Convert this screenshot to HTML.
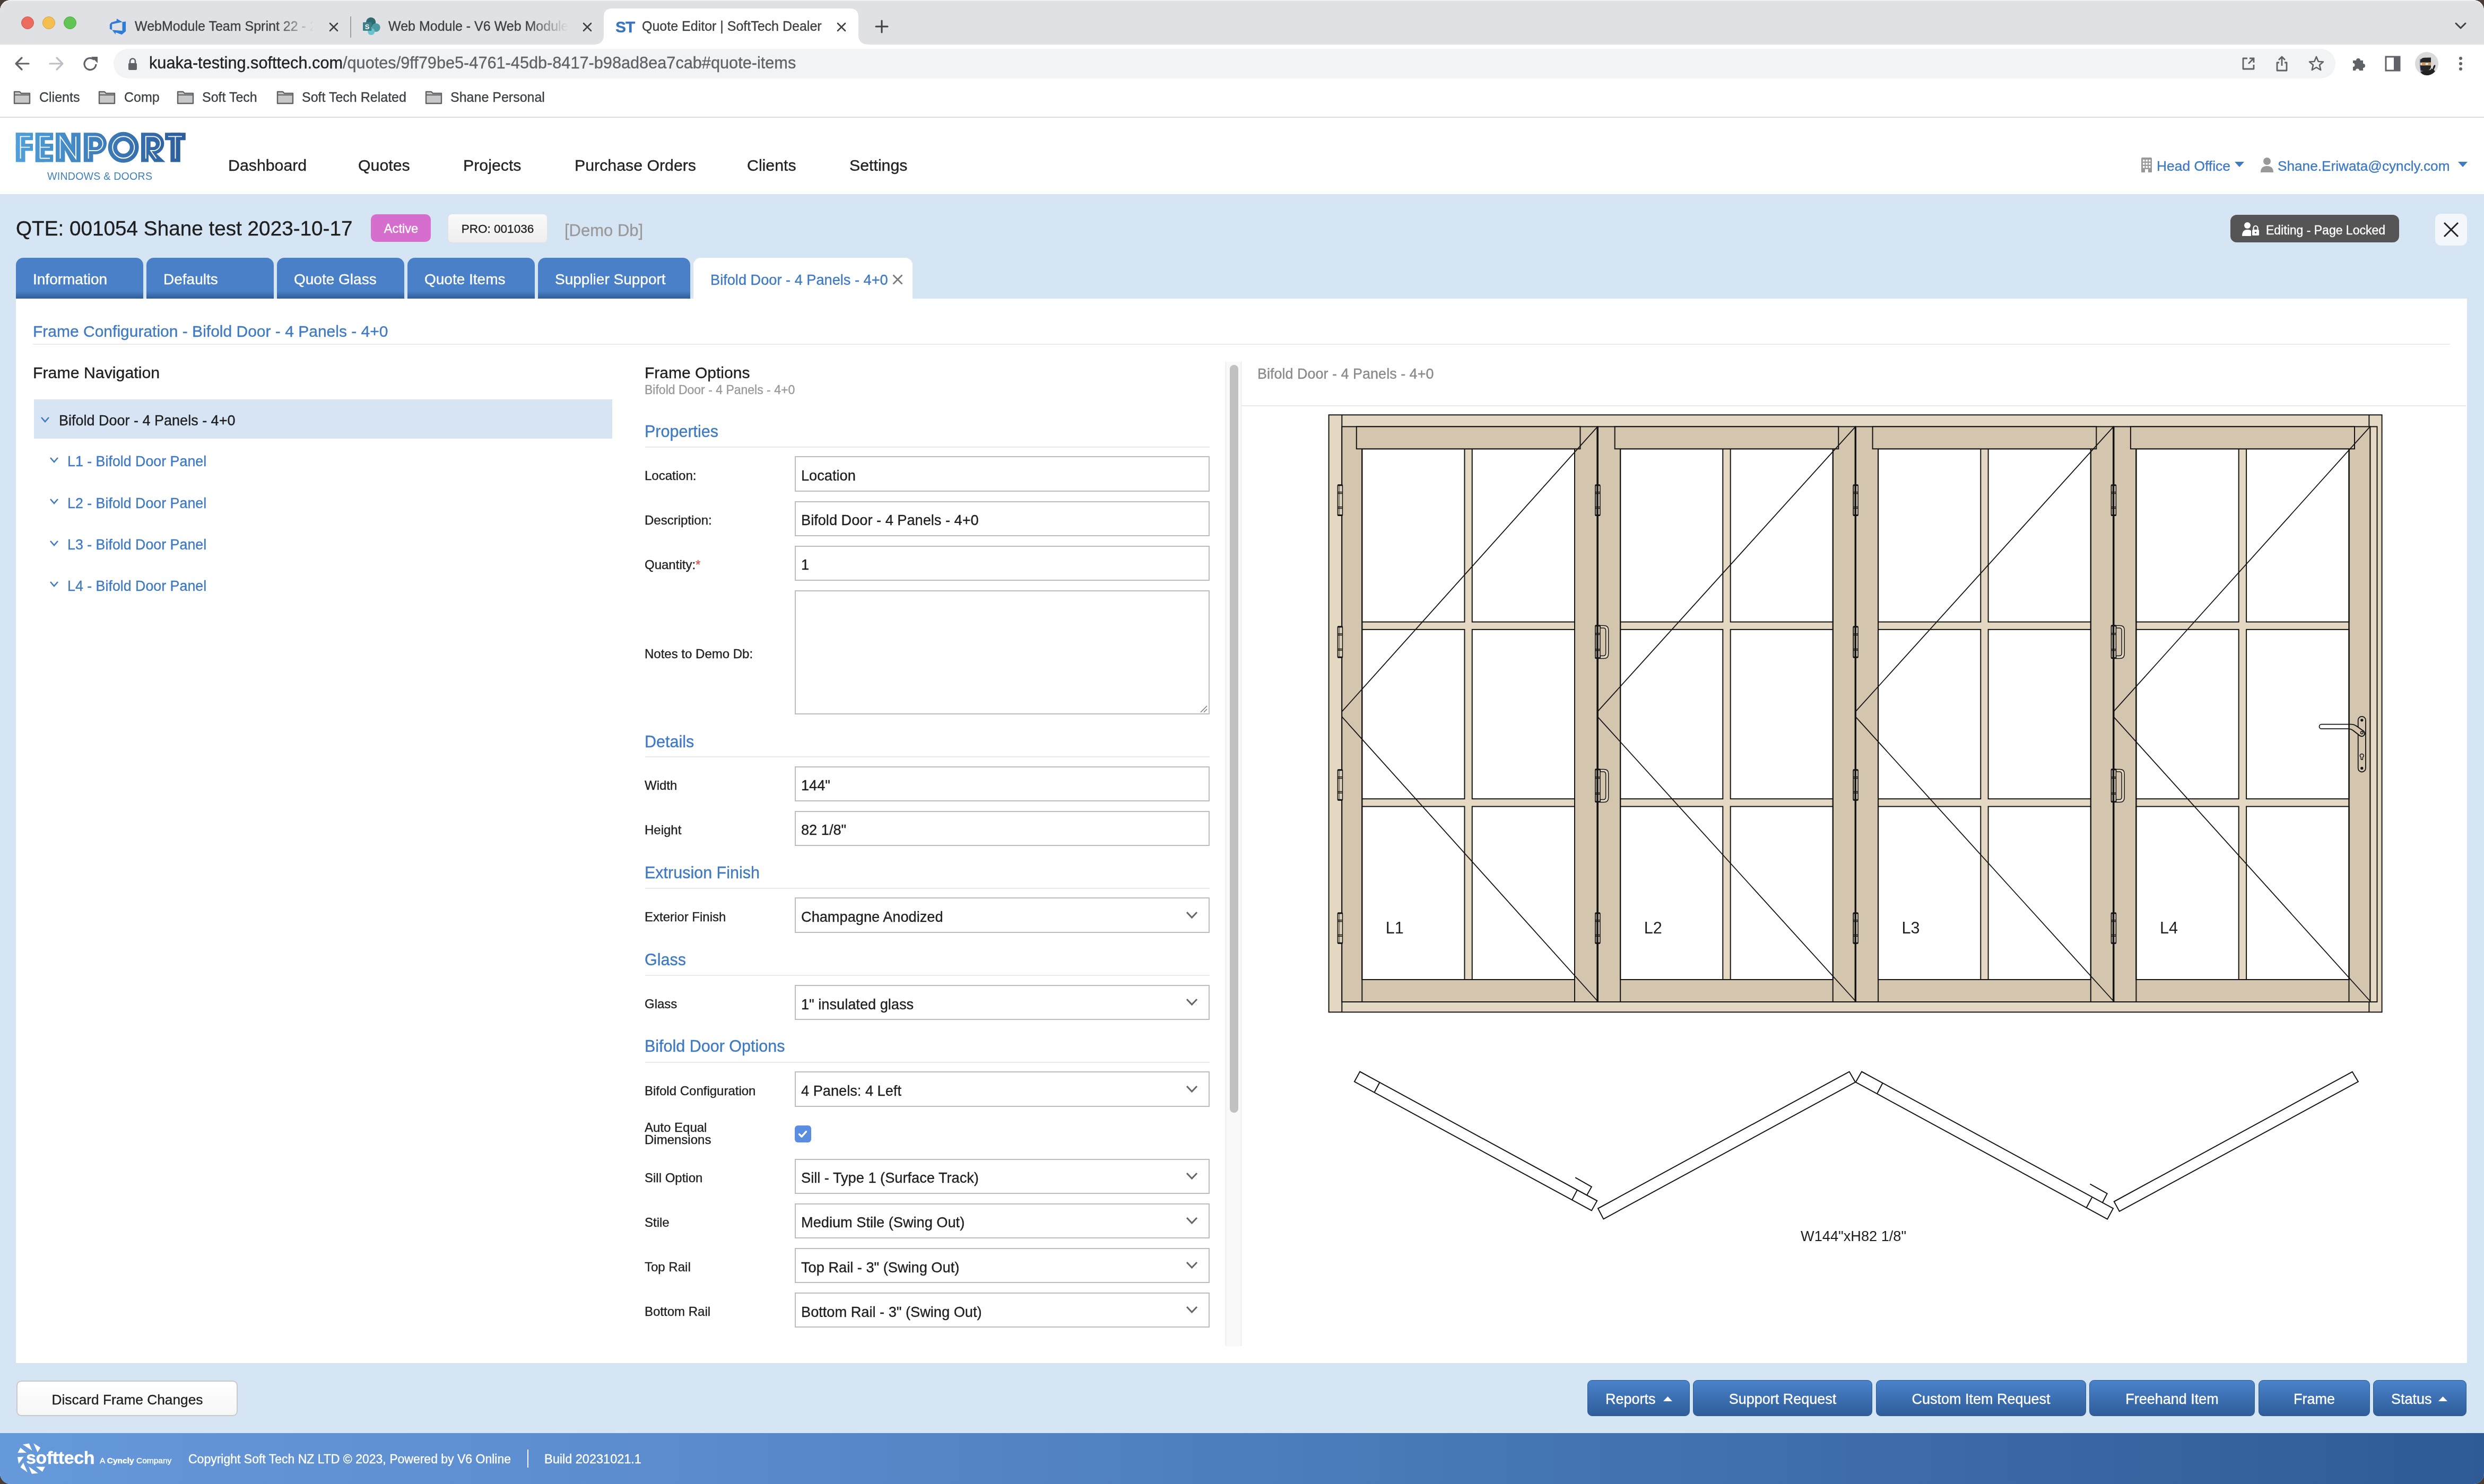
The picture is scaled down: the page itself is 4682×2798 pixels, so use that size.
<!DOCTYPE html><html><head><meta charset="utf-8"><title>Quote Editor | SoftTech Dealer</title><style>
html,body{margin:0;padding:0;width:4682px;height:2798px;overflow:hidden;background:#4A3D36;}
#win{position:absolute;left:0;top:0;width:4682px;height:2798px;overflow:hidden;border-radius:20px;background:#fff;}
#hl{position:absolute;left:0;top:0;width:4682px;height:60px;border-radius:20px 20px 0 0;box-shadow:inset 0 1.5px 0 #F4F4F4;pointer-events:none;}
.t{position:absolute;line-height:1;white-space:pre;font-family:"Liberation Sans",sans-serif;-webkit-font-smoothing:antialiased;will-change:transform;-webkit-text-stroke:0.35px currentColor;}
.r{position:absolute;box-sizing:border-box;}
svg.r{overflow:visible;}
</style></head><body><div id="win">
<div class="r" style="left:0.0px;top:0.0px;width:4682.0px;height:84.0px;background:#DFE1E5;"></div>
<div id="hl"></div>
<div class="r" style="left:40.0px;top:31.0px;width:24.0px;height:24.0px;background:#EC6A5E;border-radius:50%;border:1px solid #D1584C;"></div>
<div class="r" style="left:80.0px;top:31.0px;width:24.0px;height:24.0px;background:#F4BF4F;border-radius:50%;border:1px solid #D6A13A;"></div>
<div class="r" style="left:120.0px;top:31.0px;width:24.0px;height:24.0px;background:#61C554;border-radius:50%;border:1px solid #4FA843;"></div>
<svg class="r" style="left:205px;top:33px;" width="34" height="34" viewBox="0 0 18 18"><path d="M17 4v9.74l-4 3.28-6.2-2.26V17l-3.51-4.59 10.23.8V4.44zm-3.41.49L7.85 1v2.29L2.58 4.84 1 6.87v4.61l2.26 1V6.57z" fill="#2F7BD8"/></svg>
<div class="t" style="left:253.5px;top:36.8px;font-size:25px;color:#3C4043;font-weight:400;">WebModule Team Sprint 22 - 2</div>
<div class="r" style="left:520.0px;top:30.0px;width:85.0px;height:42.0px;background:linear-gradient(90deg,rgba(223,225,229,0),#DFE1E5 85%);"></div>
<svg class="r" style="left:620px;top:42px;" width="18" height="18" viewBox="0 0 18 18"><path d="M2 2 L16 16 M16 2 L2 16" stroke="#3C4043" stroke-width="2.6" stroke-linecap="round"/></svg>
<div class="r" style="left:660.0px;top:31.0px;width:2.0px;height:40.0px;background:#9AA0A6;"></div>
<svg class="r" style="left:682px;top:32px;" width="36" height="36" viewBox="0 0 36 36"><circle cx="17.1" cy="9.9" r="9.2" fill="#2E6B70"/><circle cx="26.7" cy="20" r="8" fill="#4C9AA2"/><circle cx="17.8" cy="27.5" r="6.6" fill="#68C3CF"/><rect x="2" y="10" width="16.4" height="16" rx="1" fill="#3C8087"/><text x="10.2" y="22.6" font-family="Liberation Sans" font-weight="700" font-size="13" fill="#fff" text-anchor="middle">S</text></svg>
<div class="t" style="left:731.5px;top:36.8px;font-size:25px;color:#3C4043;font-weight:400;">Web Module - V6 Web Module</div>
<div class="r" style="left:995.0px;top:30.0px;width:85.0px;height:42.0px;background:linear-gradient(90deg,rgba(223,225,229,0),#DFE1E5 90%);"></div>
<svg class="r" style="left:1098px;top:42px;" width="18" height="18" viewBox="0 0 18 18"><path d="M2 2 L16 16 M16 2 L2 16" stroke="#3C4043" stroke-width="2.6" stroke-linecap="round"/></svg>
<svg class="r" style="left:1118px;top:14px;" width="520" height="72" viewBox="0 0 520 72"><path d="M0 70 Q20 70 20 52 L20 18 Q20 2 36 2 L484 2 Q500 2 500 18 L500 52 Q500 70 520 70 Z" fill="#fff"/></svg>
<div class="r" style="left:1110.0px;top:84.0px;width:3572.0px;height:2.0px;background:#fff;"></div>
<div class="t" style="left:1159.5px;top:35.6px;font-size:30px;color:#3B75C0;font-weight:700;letter-spacing:-1px;">ST</div>
<div class="t" style="left:1209.5px;top:36.8px;font-size:25px;color:#3C4043;font-weight:400;">Quote Editor | SoftTech Dealer</div>
<svg class="r" style="left:1577px;top:42px;" width="18" height="18" viewBox="0 0 18 18"><path d="M2 2 L16 16 M16 2 L2 16" stroke="#3C4043" stroke-width="2.6" stroke-linecap="round"/></svg>
<svg class="r" style="left:1649px;top:37px;" width="26" height="26" viewBox="0 0 26 26"><path d="M13 2 V24 M2 13 H24" stroke="#3C4043" stroke-width="3" stroke-linecap="round"/></svg>
<svg class="r" style="left:4626px;top:40px;" width="24" height="18" viewBox="0 0 24 18"><path d="M3 4 L12 13 L21 4" stroke="#3C4043" stroke-width="3" fill="none" stroke-linecap="round" stroke-linejoin="round"/></svg>
<svg class="r" style="left:26px;top:104px;" width="32" height="32" viewBox="0 0 32 32"><path d="M28 16 H6 M15 5 L4 16 L15 27" stroke="#5F6368" stroke-width="3.2" fill="none" stroke-linecap="round" stroke-linejoin="round"/></svg>
<svg class="r" style="left:90px;top:104px;" width="32" height="32" viewBox="0 0 32 32"><path d="M4 16 H26 M17 5 L28 16 L17 27" stroke="#BDC1C6" stroke-width="3.2" fill="none" stroke-linecap="round" stroke-linejoin="round"/></svg>
<svg class="r" style="left:155px;top:104px;" width="32" height="32" viewBox="0 0 32 32"><path d="M26 17 A11 11 0 1 1 22.5 8.5" stroke="#5F6368" stroke-width="3.2" fill="none"/><path d="M17 3 L29 3 L29 15 Z" fill="#5F6368"/></svg>
<div class="r" style="left:214.0px;top:92.0px;width:4188.0px;height:56.0px;background:#F1F3F4;border-radius:28px;"></div>
<svg class="r" style="left:240px;top:108px;" width="20" height="26" viewBox="0 0 20 26"><path d="M5 11 V7.5 A5 5 0 0 1 15 7.5 V11" stroke="#5F6368" stroke-width="2.6" fill="none"/><rect x="2" y="11" width="16" height="13" rx="2" fill="#5F6368"/></svg>
<div class="t" style="left:280.5px;top:104.0px;font-size:30.7px;color:#202124;font-weight:400;">kuaka-testing.softtech.com<span style="color:#5F6368">/quotes/9ff79be5-4761-45db-8417-b98ad8ea7cab#quote-items</span></div>
<svg class="r" style="left:4224px;top:106px;" width="28" height="28" viewBox="0 0 28 28"><path d="M12 4 H4 V24 H24 V16" stroke="#5F6368" stroke-width="2.8" fill="none" stroke-linejoin="round"/><path d="M14 14 L24 4 M16 4 H24 V12" stroke="#5F6368" stroke-width="2.8" fill="none"/></svg>
<svg class="r" style="left:4287px;top:104px;" width="28" height="32" viewBox="0 0 28 32"><path d="M14 3 V20 M8 9 L14 3 L20 9" stroke="#5F6368" stroke-width="2.8" fill="none" stroke-linejoin="round"/><path d="M9 14 H5 V29 H23 V14 H19" stroke="#5F6368" stroke-width="2.8" fill="none" stroke-linejoin="round"/></svg>
<svg class="r" style="left:4350px;top:104px;" width="32" height="32" viewBox="0 0 32 32"><path d="M16 3 L19.8 12 L29 12.5 L22 18.6 L24.2 28 L16 23 L7.8 28 L10 18.6 L3 12.5 L12.2 12 Z" stroke="#5F6368" stroke-width="2.6" fill="none" stroke-linejoin="round"/></svg>
<svg class="r" style="left:4430px;top:104px;" width="32" height="32" viewBox="0 0 32 32"><path d="M5 10 H11 A4 4 0 0 1 19 10 H24 V16 A4 4 0 0 1 24 24 V29 H17 A3.5 3.5 0 0 0 10 29 H5 V22 A3.5 3.5 0 0 0 5 15 Z" fill="#5F6368"/></svg>
<svg class="r" style="left:4494px;top:104px;" width="32" height="32" viewBox="0 0 32 32"><rect x="3" y="3" width="26" height="26" fill="none" stroke="#5F6368" stroke-width="3"/><rect x="18" y="3" width="11" height="26" fill="#5F6368"/></svg>
<svg class="r" style="left:4550px;top:97px;" width="46" height="46" viewBox="0 0 46 46"><circle cx="24" cy="23" r="22" fill="#DADADA"/><path d="M12 38 Q16 46 27 45 Q36 43 40 37 L34 34 Z" fill="#222"/><path d="M11.5 20 Q12 12 20 11.8 L32 11.5 L32 30 Q30 36 22 37 Q14 37 12 36 Z" fill="#262626"/><path d="M12 14 Q11 26 13 36" stroke="#3B5A8A" stroke-width="1.2" fill="none"/><rect x="11.5" y="20.5" width="20.5" height="6" fill="#C59A6E"/><ellipse cx="13.5" cy="23.6" rx="1.4" ry="1.6" fill="#fff"/><ellipse cx="24.3" cy="23.6" rx="3" ry="1.4" fill="#fff"/><path d="M39.5 25 Q41 26 40 29 L36 37 L34 36 L37 27 Z" fill="#222"/><path d="M32 33 L38 36" stroke="#222" stroke-width="2"/></svg>
<div class="r" style="left:4635.0px;top:106.8px;width:6.4px;height:6.4px;background:#5F6368;border-radius:50%;"></div>
<div class="r" style="left:4635.0px;top:116.8px;width:6.4px;height:6.4px;background:#5F6368;border-radius:50%;"></div>
<div class="r" style="left:4635.0px;top:126.8px;width:6.4px;height:6.4px;background:#5F6368;border-radius:50%;"></div>
<svg class="r" style="left:25px;top:170px;" width="34" height="28" viewBox="0 0 34 28"><path d="M2 3 H12 L15 6 H31 V25 H2 Z" fill="#C8C8C8" stroke="#5F6368" stroke-width="2.4" stroke-linejoin="round"/><path d="M2 9 H31" stroke="#5F6368" stroke-width="2"/></svg>
<div class="t" style="left:73.5px;top:170.8px;font-size:25px;color:#3C4043;font-weight:400;">Clients</div>
<svg class="r" style="left:185px;top:170px;" width="34" height="28" viewBox="0 0 34 28"><path d="M2 3 H12 L15 6 H31 V25 H2 Z" fill="#C8C8C8" stroke="#5F6368" stroke-width="2.4" stroke-linejoin="round"/><path d="M2 9 H31" stroke="#5F6368" stroke-width="2"/></svg>
<div class="t" style="left:233.5px;top:170.8px;font-size:25px;color:#3C4043;font-weight:400;">Comp</div>
<svg class="r" style="left:333px;top:170px;" width="34" height="28" viewBox="0 0 34 28"><path d="M2 3 H12 L15 6 H31 V25 H2 Z" fill="#C8C8C8" stroke="#5F6368" stroke-width="2.4" stroke-linejoin="round"/><path d="M2 9 H31" stroke="#5F6368" stroke-width="2"/></svg>
<div class="t" style="left:381.0px;top:170.8px;font-size:25px;color:#3C4043;font-weight:400;">Soft Tech</div>
<svg class="r" style="left:521px;top:170px;" width="34" height="28" viewBox="0 0 34 28"><path d="M2 3 H12 L15 6 H31 V25 H2 Z" fill="#C8C8C8" stroke="#5F6368" stroke-width="2.4" stroke-linejoin="round"/><path d="M2 9 H31" stroke="#5F6368" stroke-width="2"/></svg>
<div class="t" style="left:568.5px;top:170.8px;font-size:25px;color:#3C4043;font-weight:400;">Soft Tech Related</div>
<svg class="r" style="left:801px;top:170px;" width="34" height="28" viewBox="0 0 34 28"><path d="M2 3 H12 L15 6 H31 V25 H2 Z" fill="#C8C8C8" stroke="#5F6368" stroke-width="2.4" stroke-linejoin="round"/><path d="M2 9 H31" stroke="#5F6368" stroke-width="2"/></svg>
<div class="t" style="left:848.5px;top:170.8px;font-size:25px;color:#3C4043;font-weight:400;">Shane Personal</div>
<div class="r" style="left:0.0px;top:220.0px;width:4682.0px;height:2.0px;background:#D9DBDE;"></div>
<svg class="r" style="left:0px;top:0px;" width="400" height="400" viewBox="0 0 400 400"><defs><linearGradient id="fg" gradientUnits="userSpaceOnUse" x1="30" x2="350" y1="0" y2="0"><stop offset="0" stop-color="#4FA0D8"/><stop offset="1" stop-color="#2D5C9C"/></linearGradient></defs>
<g fill="url(#fg)">
<rect x="29.8" y="250.3" width="17.7" height="55.2"/><rect x="29.8" y="250.3" width="32.2" height="14"/><rect x="29.8" y="271" width="32.2" height="13.4"/>
<rect x="66.8" y="250.3" width="17.7" height="55.2"/><rect x="66.8" y="250.3" width="33.4" height="14"/><rect x="66.8" y="271" width="33.4" height="13.4"/><rect x="66.8" y="291.5" width="33.4" height="14"/>
<rect x="105" y="250.3" width="17.4" height="55.2"/><rect x="134.3" y="250.3" width="17.4" height="55.2"/><polygon points="105,250.3 122.4,250.3 151.7,305.5 134.3,305.5"/>
<path d="M157.8 250.3 H180.7 A20.3 20.3 0 0 1 180.7 290.9 H175.5 V305.5 H157.8 Z M175.5 266.7 V277.2 H180 A5.25 5.25 0 0 0 180 266.7 Z" fill-rule="evenodd"/>
<path d="M232.7 248.8 A29 29 0 1 1 232.6 248.8 Z M232.7 265.8 A12 12 0 1 0 232.8 265.8 Z" fill-rule="evenodd"/>
<path d="M266 250.3 H289 A20.3 20.3 0 0 1 295 290 L311.6 305.5 H291 L280 290.9 V305.5 H266 Z M283.7 266.7 V277.2 H288.5 A5.25 5.25 0 0 0 288.5 266.7 Z" fill-rule="evenodd"/>
<rect x="311" y="250.3" width="38.8" height="14"/><rect x="321.3" y="250.3" width="18.5" height="55.2"/>
</g>
<g stroke="#fff" stroke-width="1.9" fill="none">
<path d="M38.6 299 V257.4 H56.7 M38.6 277.6 H56.4"/>
<path d="M75.6 298.5 V257.4 H94 M75.6 277.6 H94 M75.6 298.5 H94"/>
<path d="M113.5 299 V257.4 L143 299 V257.4"/>
<path d="M166.7 299 V257.4 H180.5 A13.3 13.3 0 0 1 180.5 284 H166.7"/>
<circle cx="232.7" cy="277.8" r="20.5"/>
<path d="M274.8 299 V257.4 H289 A13.3 13.3 0 0 1 289 284 H284 L294.5 299"/>
<path d="M317 257.4 H343 M330.5 257.4 V299"/>
</g>
<text x="89" y="339" font-family="Liberation Sans" font-size="19.6" fill="#3F80C2" textLength="198" lengthAdjust="spacing">WINDOWS &amp; DOORS</text></svg>
<div class="t" style="left:429.5px;top:297.0px;font-size:30.3px;color:#222;font-weight:400;">Dashboard</div>
<div class="t" style="left:675.1px;top:297.0px;font-size:30.3px;color:#222;font-weight:400;">Quotes</div>
<div class="t" style="left:872.5px;top:297.0px;font-size:30.3px;color:#222;font-weight:400;">Projects</div>
<div class="t" style="left:1082.5px;top:297.0px;font-size:30.3px;color:#222;font-weight:400;">Purchase Orders</div>
<div class="t" style="left:1407.5px;top:297.0px;font-size:30.3px;color:#222;font-weight:400;">Clients</div>
<div class="t" style="left:1600.5px;top:297.0px;font-size:30.3px;color:#222;font-weight:400;">Settings</div>
<svg class="r" style="left:4034px;top:296px;" width="24" height="30" viewBox="0 0 24 30"><path d="M2 3 Q2 1 4 1 H20 Q22 1 22 3 V29 H15 V23 H9 V29 H2 Z" fill="#999"/><rect x="5" y="5" width="3.5" height="3.5" fill="#fff"/><rect x="5" y="11" width="3.5" height="3.5" fill="#fff"/><rect x="5" y="17" width="3.5" height="3.5" fill="#fff"/><rect x="10.5" y="5" width="3.5" height="3.5" fill="#fff"/><rect x="10.5" y="11" width="3.5" height="3.5" fill="#fff"/><rect x="10.5" y="17" width="3.5" height="3.5" fill="#fff"/><rect x="16" y="5" width="3.5" height="3.5" fill="#fff"/><rect x="16" y="11" width="3.5" height="3.5" fill="#fff"/><rect x="16" y="17" width="3.5" height="3.5" fill="#fff"/></svg>
<div class="t" style="left:4064.5px;top:299.6px;font-size:26.4px;color:#3F7AC4;font-weight:400;">Head Office</div>
<svg class="r" style="left:4212px;top:305px;" width="18" height="10" viewBox="0 0 18 10"><path d="M0 0 H18 L9 10 Z" fill="#3F7AC4"/></svg>
<svg class="r" style="left:4260px;top:296px;" width="26" height="30" viewBox="0 0 26 30"><circle cx="13" cy="8" r="7" fill="#999"/><path d="M1 29 Q1 17 13 17 Q25 17 25 29 Z" fill="#999"/></svg>
<div class="t" style="left:4292.5px;top:299.8px;font-size:26.2px;color:#3F7AC4;font-weight:400;">Shane.Eriwata@cyncly.com</div>
<svg class="r" style="left:4633px;top:305px;" width="18" height="10" viewBox="0 0 18 10"><path d="M0 0 H18 L9 10 Z" fill="#3F7AC4"/></svg>
<div class="r" style="left:0.0px;top:366.0px;width:4682.0px;height:2336.0px;background:#D6E5F4;"></div>
<div class="t" style="left:29.5px;top:412.2px;font-size:38.7px;color:#1E1E1E;font-weight:400;">QTE: 001054 Shane test 2023-10-17</div>
<div class="r" style="left:699.0px;top:404.0px;width:113.0px;height:52.0px;background:#D66ECD;border-radius:10px;"></div>
<div class="t" style="left:-244.5px;width:2000px;text-align:center;top:419.9px;font-size:23.7px;color:#fff;font-weight:400;">Active</div>
<div class="r" style="left:844.0px;top:402.5px;width:187.5px;height:55.0px;background:linear-gradient(#FAFAFA,#EEEEEE);border:1.5px solid #E2E2E2;border-radius:8px;"></div>
<div class="t" style="left:-62.3px;width:2000px;text-align:center;top:420.9px;font-size:22.5px;color:#1E1E1E;font-weight:400;">PRO: 001036</div>
<div class="t" style="left:1063.5px;top:419.4px;font-size:31px;color:#999;font-weight:400;">[Demo Db]</div>
<div class="r" style="left:4204.0px;top:405.0px;width:318.0px;height:52.0px;background:#555;border-radius:12px;"></div>
<svg class="r" style="left:4226px;top:418px;" width="34" height="28" viewBox="0 0 34 28"><circle cx="10" cy="7" r="6" fill="#fff"/><path d="M0 27 Q0 15 10 15 Q15 15 17 17 L17 27 Z" fill="#fff"/><rect x="19" y="15" width="13" height="11" rx="1.5" fill="#fff"/><path d="M21.5 15 V12 A4 4 0 0 1 29.5 12 V15" stroke="#fff" stroke-width="2.2" fill="none"/><circle cx="25.5" cy="20.5" r="1.6" fill="#555"/></svg>
<div class="t" style="left:4270.5px;top:422.5px;font-size:23px;color:#fff;font-weight:400;">Editing - Page Locked</div>
<div class="r" style="left:4590.0px;top:403.0px;width:60.0px;height:60.0px;background:#F3F7FB;border-radius:11px;"></div>
<svg class="r" style="left:4604px;top:417px;" width="32" height="32" viewBox="0 0 32 32"><path d="M3 3 L29 29 M29 3 L3 29" stroke="#222" stroke-width="3"/></svg>
<div class="r" style="left:30.0px;top:486.0px;width:240.0px;height:77.0px;background:linear-gradient(#4A80C7 0,#4A80C7 82%,#2F5C97 100%);border-radius:14px 14px 0 0;"></div>
<div class="t" style="left:61.5px;top:513.3px;font-size:28px;color:#fff;font-weight:400;">Information</div>
<div class="r" style="left:276.0px;top:486.0px;width:240.0px;height:77.0px;background:linear-gradient(#4A80C7 0,#4A80C7 82%,#2F5C97 100%);border-radius:14px 14px 0 0;"></div>
<div class="t" style="left:307.5px;top:513.3px;font-size:28px;color:#fff;font-weight:400;">Defaults</div>
<div class="r" style="left:522.0px;top:486.0px;width:240.0px;height:77.0px;background:linear-gradient(#4A80C7 0,#4A80C7 82%,#2F5C97 100%);border-radius:14px 14px 0 0;"></div>
<div class="t" style="left:553.5px;top:513.3px;font-size:28px;color:#fff;font-weight:400;">Quote Glass</div>
<div class="r" style="left:768.0px;top:486.0px;width:240.0px;height:77.0px;background:linear-gradient(#4A80C7 0,#4A80C7 82%,#2F5C97 100%);border-radius:14px 14px 0 0;"></div>
<div class="t" style="left:799.5px;top:513.3px;font-size:28px;color:#fff;font-weight:400;">Quote Items</div>
<div class="r" style="left:1014.0px;top:486.0px;width:287.0px;height:77.0px;background:linear-gradient(#4A80C7 0,#4A80C7 82%,#2F5C97 100%);border-radius:14px 14px 0 0;"></div>
<div class="t" style="left:1045.5px;top:513.3px;font-size:28px;color:#fff;font-weight:400;">Supplier Support</div>
<div class="r" style="left:1307.0px;top:486.0px;width:413.0px;height:77.0px;background:#fff;border-radius:14px 14px 0 0;"></div>
<div class="t" style="left:1338.5px;top:514.0px;font-size:27.2px;color:#3F7AC4;font-weight:400;">Bifold Door - 4 Panels - 4+0</div>
<svg class="r" style="left:1682px;top:517px;" width="20" height="20" viewBox="0 0 20 20"><path d="M1.5 1.5 L18.5 18.5 M18.5 1.5 L1.5 18.5" stroke="#7A7A7A" stroke-width="2.8"/></svg>
<div class="r" style="left:30.0px;top:563.0px;width:4620.0px;height:2007.0px;background:#fff;"></div>
<div class="t" style="left:61.5px;top:609.6px;font-size:30px;color:#3F7AC4;font-weight:400;">Frame Configuration - Bifold Door - 4 Panels - 4+0</div>
<div class="r" style="left:62.0px;top:648.0px;width:4556.0px;height:2.0px;background:#EBEBEB;"></div>
<div class="t" style="left:61.5px;top:687.9px;font-size:30.3px;color:#1E1E1E;font-weight:400;">Frame Navigation</div>
<div class="r" style="left:64.0px;top:753.0px;width:1090.0px;height:74.0px;background:#D6E4F4;"></div>
<svg class="r" style="left:77px;top:786px;" width="16" height="10" viewBox="0 0 16 10"><path d="M1 1 L8.0 9 L15 1" stroke="#3F7AC4" stroke-width="2.6" fill="none"/></svg>
<div class="t" style="left:110.5px;top:779.6px;font-size:27px;color:#1E1E1E;font-weight:400;">Bifold Door - 4 Panels - 4+0</div>
<svg class="r" style="left:93.5px;top:861.5px;" width="16" height="10" viewBox="0 0 16 10"><path d="M1 1 L8.0 9 L15 1" stroke="#3F7AC4" stroke-width="2.6" fill="none"/></svg>
<div class="t" style="left:126.5px;top:857.3px;font-size:26.8px;color:#3F7AC4;font-weight:400;">L1 - Bifold Door Panel</div>
<svg class="r" style="left:93.5px;top:940.0px;" width="16" height="10" viewBox="0 0 16 10"><path d="M1 1 L8.0 9 L15 1" stroke="#3F7AC4" stroke-width="2.6" fill="none"/></svg>
<div class="t" style="left:126.5px;top:935.8px;font-size:26.8px;color:#3F7AC4;font-weight:400;">L2 - Bifold Door Panel</div>
<svg class="r" style="left:93.5px;top:1018.5px;" width="16" height="10" viewBox="0 0 16 10"><path d="M1 1 L8.0 9 L15 1" stroke="#3F7AC4" stroke-width="2.6" fill="none"/></svg>
<div class="t" style="left:126.5px;top:1014.3px;font-size:26.8px;color:#3F7AC4;font-weight:400;">L3 - Bifold Door Panel</div>
<svg class="r" style="left:93.5px;top:1096.1px;" width="16" height="10" viewBox="0 0 16 10"><path d="M1 1 L8.0 9 L15 1" stroke="#3F7AC4" stroke-width="2.6" fill="none"/></svg>
<div class="t" style="left:126.5px;top:1091.9px;font-size:26.8px;color:#3F7AC4;font-weight:400;">L4 - Bifold Door Panel</div>
<div class="t" style="left:1214.5px;top:688.0px;font-size:30px;color:#1E1E1E;font-weight:400;">Frame Options</div>
<div class="t" style="left:1214.5px;top:724.0px;font-size:23px;color:#999;font-weight:400;">Bifold Door - 4 Panels - 4+0</div>
<div class="t" style="left:1214.5px;top:798.2px;font-size:30.5px;color:#3F7AC4;font-weight:400;">Properties</div>
<div class="r" style="left:1216.0px;top:842.0px;width:1064.0px;height:2.0px;background:#EBEBEB;"></div>
<div class="r" style="left:1498.0px;top:860.0px;width:782.0px;height:67.0px;background:#fff;border:2px solid #BDBDBD;"></div>
<div class="t" style="left:1214.5px;top:884.7px;font-size:24px;color:#1E1E1E;font-weight:400;">Location:</div>
<div class="t" style="left:1509.5px;top:883.0px;font-size:27.2px;color:#1E1E1E;font-weight:400;">Location</div>
<div class="r" style="left:1498.0px;top:944.8px;width:782.0px;height:66.0px;background:#fff;border:2px solid #BDBDBD;"></div>
<div class="t" style="left:1214.5px;top:969.0px;font-size:24px;color:#1E1E1E;font-weight:400;">Description:</div>
<div class="t" style="left:1509.5px;top:967.3px;font-size:27.2px;color:#1E1E1E;font-weight:400;">Bifold Door - 4 Panels - 4+0</div>
<div class="r" style="left:1498.0px;top:1028.7px;width:782.0px;height:66.3px;background:#fff;border:2px solid #BDBDBD;"></div>
<div class="t" style="left:1214.5px;top:1053.2px;font-size:24px;color:#1E1E1E;font-weight:400;">Quantity:<span style="color:#D9534F">*</span></div>
<div class="t" style="left:1509.5px;top:1051.0px;font-size:27.2px;color:#1E1E1E;font-weight:400;">1</div>
<div class="r" style="left:1498.0px;top:1112.7px;width:782.0px;height:234.8px;background:#fff;border:2px solid #BDBDBD;"></div>
<div class="t" style="left:1214.5px;top:1220.5px;font-size:24px;color:#1E1E1E;font-weight:400;">Notes to Demo Db:</div>
<svg class="r" style="left:2262px;top:1330px;" width="14" height="14" viewBox="0 0 14 14"><path d="M1 13 L13 1 M7 13 L13 7" stroke="#777" stroke-width="1.5"/></svg>
<div class="t" style="left:1214.5px;top:1383.0px;font-size:30.5px;color:#3F7AC4;font-weight:400;">Details</div>
<div class="r" style="left:1216.0px;top:1426.0px;width:1064.0px;height:2.0px;background:#EBEBEB;"></div>
<div class="r" style="left:1498.0px;top:1444.7px;width:782.0px;height:66.3px;background:#fff;border:2px solid #BDBDBD;"></div>
<div class="t" style="left:1214.5px;top:1469.0px;font-size:24px;color:#1E1E1E;font-weight:400;">Width</div>
<div class="t" style="left:1509.5px;top:1467.3px;font-size:27.2px;color:#1E1E1E;font-weight:400;">144"</div>
<div class="r" style="left:1498.0px;top:1528.8px;width:782.0px;height:66.2px;background:#fff;border:2px solid #BDBDBD;"></div>
<div class="t" style="left:1214.5px;top:1553.1px;font-size:24px;color:#1E1E1E;font-weight:400;">Height</div>
<div class="t" style="left:1509.5px;top:1551.4px;font-size:27.2px;color:#1E1E1E;font-weight:400;">82 1/8"</div>
<div class="t" style="left:1214.5px;top:1630.0px;font-size:30.5px;color:#3F7AC4;font-weight:400;">Extrusion Finish</div>
<div class="r" style="left:1216.0px;top:1674.0px;width:1064.0px;height:2.0px;background:#EBEBEB;"></div>
<div class="r" style="left:1498.0px;top:1692.0px;width:782.0px;height:67.0px;background:#fff;border:2px solid #BDBDBD;"></div>
<div class="t" style="left:1214.5px;top:1716.7px;font-size:24px;color:#1E1E1E;font-weight:400;">Exterior Finish</div>
<div class="t" style="left:1509.5px;top:1715.0px;font-size:27.2px;color:#1E1E1E;font-weight:400;">Champagne Anodized</div>
<svg class="r" style="left:2236px;top:1718.5px;" width="21" height="12" viewBox="0 0 21 12"><path d="M1 1 L10.5 11 L20 1" stroke="#666" stroke-width="3" fill="none"/></svg>
<div class="t" style="left:1214.5px;top:1794.0px;font-size:30.5px;color:#3F7AC4;font-weight:400;">Glass</div>
<div class="r" style="left:1216.0px;top:1837.5px;width:1064.0px;height:2.0px;background:#EBEBEB;"></div>
<div class="r" style="left:1498.0px;top:1856.7px;width:782.0px;height:66.8px;background:#fff;border:2px solid #BDBDBD;"></div>
<div class="t" style="left:1214.5px;top:1881.3px;font-size:24px;color:#1E1E1E;font-weight:400;">Glass</div>
<div class="t" style="left:1509.5px;top:1879.6px;font-size:27.2px;color:#1E1E1E;font-weight:400;">1" insulated glass</div>
<svg class="r" style="left:2236px;top:1883.1px;" width="21" height="12" viewBox="0 0 21 12"><path d="M1 1 L10.5 11 L20 1" stroke="#666" stroke-width="3" fill="none"/></svg>
<div class="t" style="left:1214.5px;top:1957.2px;font-size:30.5px;color:#3F7AC4;font-weight:400;">Bifold Door Options</div>
<div class="r" style="left:1216.0px;top:2002.0px;width:1064.0px;height:2.0px;background:#EBEBEB;"></div>
<div class="r" style="left:1498.0px;top:2020.0px;width:782.0px;height:67.0px;background:#fff;border:2px solid #BDBDBD;"></div>
<div class="t" style="left:1214.5px;top:2044.7px;font-size:24px;color:#1E1E1E;font-weight:400;">Bifold Configuration</div>
<div class="t" style="left:1509.5px;top:2043.0px;font-size:27.2px;color:#1E1E1E;font-weight:400;">4 Panels: 4 Left</div>
<svg class="r" style="left:2236px;top:2046.5px;" width="21" height="12" viewBox="0 0 21 12"><path d="M1 1 L10.5 11 L20 1" stroke="#666" stroke-width="3" fill="none"/></svg>
<div class="t" style="left:1214.5px;top:2113.7px;font-size:24px;color:#1E1E1E;font-weight:400;">Auto Equal</div>
<div class="t" style="left:1214.5px;top:2136.7px;font-size:24px;color:#1E1E1E;font-weight:400;">Dimensions</div>
<div class="r" style="left:1497.6px;top:2122.0px;width:31.0px;height:31.5px;background:#5A8DE0;border-radius:6px;"></div>
<svg class="r" style="left:1503px;top:2128px;" width="20" height="20" viewBox="0 0 20 20"><path d="M3.5 10.5 L8 15 L16.5 5.5" stroke="#fff" stroke-width="3.4" fill="none" stroke-linecap="round" stroke-linejoin="round"/></svg>
<div class="r" style="left:1498.0px;top:2184.8px;width:782.0px;height:66.2px;background:#fff;border:2px solid #BDBDBD;"></div>
<div class="t" style="left:1214.5px;top:2209.1px;font-size:24px;color:#1E1E1E;font-weight:400;">Sill Option</div>
<div class="t" style="left:1509.5px;top:2207.4px;font-size:27.2px;color:#1E1E1E;font-weight:400;">Sill - Type 1 (Surface Track)</div>
<svg class="r" style="left:2236px;top:2210.9px;" width="21" height="12" viewBox="0 0 21 12"><path d="M1 1 L10.5 11 L20 1" stroke="#666" stroke-width="3" fill="none"/></svg>
<div class="r" style="left:1498.0px;top:2268.8px;width:782.0px;height:66.2px;background:#fff;border:2px solid #BDBDBD;"></div>
<div class="t" style="left:1214.5px;top:2293.1px;font-size:24px;color:#1E1E1E;font-weight:400;">Stile</div>
<div class="t" style="left:1509.5px;top:2291.4px;font-size:27.2px;color:#1E1E1E;font-weight:400;">Medium Stile (Swing Out)</div>
<svg class="r" style="left:2236px;top:2294.9px;" width="21" height="12" viewBox="0 0 21 12"><path d="M1 1 L10.5 11 L20 1" stroke="#666" stroke-width="3" fill="none"/></svg>
<div class="r" style="left:1498.0px;top:2353.0px;width:782.0px;height:66.0px;background:#fff;border:2px solid #BDBDBD;"></div>
<div class="t" style="left:1214.5px;top:2377.2px;font-size:24px;color:#1E1E1E;font-weight:400;">Top Rail</div>
<div class="t" style="left:1509.5px;top:2375.5px;font-size:27.2px;color:#1E1E1E;font-weight:400;">Top Rail - 3" (Swing Out)</div>
<svg class="r" style="left:2236px;top:2379.0px;" width="21" height="12" viewBox="0 0 21 12"><path d="M1 1 L10.5 11 L20 1" stroke="#666" stroke-width="3" fill="none"/></svg>
<div class="r" style="left:1498.0px;top:2437.0px;width:782.0px;height:66.0px;background:#fff;border:2px solid #BDBDBD;"></div>
<div class="t" style="left:1214.5px;top:2461.2px;font-size:24px;color:#1E1E1E;font-weight:400;">Bottom Rail</div>
<div class="t" style="left:1509.5px;top:2459.5px;font-size:27.2px;color:#1E1E1E;font-weight:400;">Bottom Rail - 3" (Swing Out)</div>
<svg class="r" style="left:2236px;top:2463.0px;" width="21" height="12" viewBox="0 0 21 12"><path d="M1 1 L10.5 11 L20 1" stroke="#666" stroke-width="3" fill="none"/></svg>
<div class="r" style="left:2310.0px;top:682.0px;width:30.0px;height:1856.0px;background:#F9F9F9;border-left:1.5px solid #E6E6E6;border-right:1.5px solid #E6E6E6;"></div>
<div class="r" style="left:2318.0px;top:688.0px;width:16.0px;height:1410.0px;background:#C1C1C1;border-radius:8px;"></div>
<div class="t" style="left:2370.2px;top:692.1px;font-size:27px;color:#8A8A8A;font-weight:400;">Bifold Door - 4 Panels - 4+0</div>
<div class="r" style="left:2340.0px;top:764.0px;width:2308.0px;height:2.0px;background:#EBEBEB;"></div>
<svg class="r" style="left:0;top:0" width="4682" height="2798" viewBox="0 0 4682 2798">
<g stroke="#141414" stroke-width="2" fill="none">
<rect x="2504.6" y="782.3" width="1985.0000000000005" height="1126.0" fill="#E5D9C3"/>
<line x1="2529.3" y1="782.3" x2="2529.3" y2="1908.3"/>
<line x1="4465.4" y1="782.3" x2="4465.4" y2="1908.3"/>
<rect x="4467.3" y="804.4" width="13.2" height="1084.6" fill="#E5D9C3"/>
<rect x="2529.3" y="804.4" width="481.9" height="1084.6" fill="#D4C5AF"/>
<rect x="2567.3" y="846.3" width="400.7" height="1000.7" fill="#E5D9C3"/>
<rect x="2567.3" y="846.3" width="193.2" height="326.3" fill="#fff"/>
<rect x="2774.8" y="846.3" width="193.2" height="326.3" fill="#fff"/>
<rect x="2567.3" y="1186.9" width="193.2" height="319.3" fill="#fff"/>
<rect x="2774.8" y="1186.9" width="193.2" height="319.3" fill="#fff"/>
<rect x="2567.3" y="1520.6" width="193.2" height="326.4" fill="#fff"/>
<rect x="2774.8" y="1520.6" width="193.2" height="326.4" fill="#fff"/>
<path d="M2567.3 846.3 V1889.0 M2968.0 846.3 V1889.0"/>
<rect x="2556.8" y="804.4" width="421.7" height="41.9" fill="#D4C5AF"/>
<path d="M3011.2 804.4 L2529.3 1341.7 M2529.3 1351.4 L3011.2 1887.5" stroke-width="1.8"/>
<text x="2611.8" y="1760" font-family="Liberation Sans" font-size="30.6" fill="#1E1E1E" stroke="none">L1</text>
<rect x="3011.2" y="804.4" width="486.2" height="1084.6" fill="#D4C5AF"/>
<rect x="3054.2" y="846.3" width="400.6" height="1000.7" fill="#E5D9C3"/>
<rect x="3054.2" y="846.3" width="193.1" height="326.3" fill="#fff"/>
<rect x="3261.7" y="846.3" width="193.1" height="326.3" fill="#fff"/>
<rect x="3054.2" y="1186.9" width="193.1" height="319.3" fill="#fff"/>
<rect x="3261.7" y="1186.9" width="193.1" height="319.3" fill="#fff"/>
<rect x="3054.2" y="1520.6" width="193.1" height="326.4" fill="#fff"/>
<rect x="3261.7" y="1520.6" width="193.1" height="326.4" fill="#fff"/>
<path d="M3054.2 846.3 V1889.0 M3454.75 846.3 V1889.0"/>
<rect x="3043.7" y="804.4" width="421.6" height="41.9" fill="#D4C5AF"/>
<path d="M3497.4 804.4 L3011.2 1341.7 M3011.2 1351.4 L3497.4 1887.5" stroke-width="1.8"/>
<text x="3098.7" y="1760" font-family="Liberation Sans" font-size="30.6" fill="#1E1E1E" stroke="none">L2</text>
<rect x="3497.4" y="804.4" width="486.3" height="1084.6" fill="#D4C5AF"/>
<rect x="3540.1" y="846.3" width="400.7" height="1000.7" fill="#E5D9C3"/>
<rect x="3540.1" y="846.3" width="193.2" height="326.3" fill="#fff"/>
<rect x="3747.6" y="846.3" width="193.2" height="326.3" fill="#fff"/>
<rect x="3540.1" y="1186.9" width="193.2" height="319.3" fill="#fff"/>
<rect x="3747.6" y="1186.9" width="193.2" height="319.3" fill="#fff"/>
<rect x="3540.1" y="1520.6" width="193.2" height="326.4" fill="#fff"/>
<rect x="3747.6" y="1520.6" width="193.2" height="326.4" fill="#fff"/>
<path d="M3540.1 846.3 V1889.0 M3940.8 846.3 V1889.0"/>
<rect x="3529.6" y="804.4" width="421.7" height="41.9" fill="#D4C5AF"/>
<path d="M3983.7 804.4 L3497.4 1341.7 M3497.4 1351.4 L3983.7 1887.5" stroke-width="1.8"/>
<text x="3584.6" y="1760" font-family="Liberation Sans" font-size="30.6" fill="#1E1E1E" stroke="none">L3</text>
<rect x="3983.7" y="804.4" width="483.6" height="1084.6" fill="#D4C5AF"/>
<rect x="4026.4" y="846.3" width="401.1" height="1000.7" fill="#E5D9C3"/>
<rect x="4026.4" y="846.3" width="193.3" height="326.3" fill="#fff"/>
<rect x="4234.1" y="846.3" width="193.4" height="326.3" fill="#fff"/>
<rect x="4026.4" y="1186.9" width="193.3" height="319.3" fill="#fff"/>
<rect x="4234.1" y="1186.9" width="193.4" height="319.3" fill="#fff"/>
<rect x="4026.4" y="1520.6" width="193.3" height="326.4" fill="#fff"/>
<rect x="4234.1" y="1520.6" width="193.4" height="326.4" fill="#fff"/>
<path d="M4026.4 846.3 V1889.0 M4427.5 846.3 V1889.0"/>
<rect x="4015.9" y="804.4" width="422.1" height="41.9" fill="#D4C5AF"/>
<path d="M4467.3 804.4 L3983.7 1341.7 M3983.7 1351.4 L4467.3 1887.5" stroke-width="1.8"/>
<text x="4070.9" y="1760" font-family="Liberation Sans" font-size="30.6" fill="#1E1E1E" stroke="none">L4</text>
<line x1="3011.2" y1="804.4" x2="3011.2" y2="1889.0" stroke-width="3.2"/>
<line x1="3497.4" y1="804.4" x2="3497.4" y2="1889.0" stroke-width="3.2"/>
<line x1="3983.7" y1="804.4" x2="3983.7" y2="1889.0" stroke-width="3.2"/>
<rect x="2521.4" y="914.0" width="9" height="58.2" rx="1.5" fill="#E5D9C3" stroke-width="1.6"/>
<rect x="2522.4" y="915.0" width="3.5" height="56.2" fill="#9C9282" stroke="none"/>
<path d="M2521.4 927.8 H2530.4 M2521.4 930.4 H2530.4" stroke-width="1.5"/>
<path d="M2521.4 955.8 H2530.4 M2521.4 958.4 H2530.4" stroke-width="1.5"/>
<path d="M2521.4 915.0 H2530.4 M2521.4 971.2 H2530.4" stroke-width="2.4"/>
<rect x="2521.4" y="1181.0" width="9" height="59.0" rx="1.5" fill="#E5D9C3" stroke-width="1.6"/>
<rect x="2522.4" y="1182.0" width="3.5" height="57.0" fill="#9C9282" stroke="none"/>
<path d="M2521.4 1195.0 H2530.4 M2521.4 1197.6 H2530.4" stroke-width="1.5"/>
<path d="M2521.4 1223.4 H2530.4 M2521.4 1226.0 H2530.4" stroke-width="1.5"/>
<path d="M2521.4 1182.0 H2530.4 M2521.4 1239.0 H2530.4" stroke-width="2.4"/>
<rect x="2521.4" y="1451.0" width="9" height="58.0" rx="1.5" fill="#E5D9C3" stroke-width="1.6"/>
<rect x="2522.4" y="1452.0" width="3.5" height="56.0" fill="#9C9282" stroke="none"/>
<path d="M2521.4 1464.8 H2530.4 M2521.4 1467.4 H2530.4" stroke-width="1.5"/>
<path d="M2521.4 1492.6 H2530.4 M2521.4 1495.2 H2530.4" stroke-width="1.5"/>
<path d="M2521.4 1452.0 H2530.4 M2521.4 1508.0 H2530.4" stroke-width="2.4"/>
<rect x="2521.4" y="1721.0" width="9" height="58.0" rx="1.5" fill="#E5D9C3" stroke-width="1.6"/>
<rect x="2522.4" y="1722.0" width="3.5" height="56.0" fill="#9C9282" stroke="none"/>
<path d="M2521.4 1734.8 H2530.4 M2521.4 1737.4 H2530.4" stroke-width="1.5"/>
<path d="M2521.4 1762.6 H2530.4 M2521.4 1765.2 H2530.4" stroke-width="1.5"/>
<path d="M2521.4 1722.0 H2530.4 M2521.4 1778.0 H2530.4" stroke-width="2.4"/>
<rect x="3006.9" y="914.0" width="9" height="58.2" rx="1.5" fill="#E5D9C3" stroke-width="1.6"/>
<rect x="3007.9" y="915.0" width="3.5" height="56.2" fill="#9C9282" stroke="none"/>
<path d="M3006.9 927.8 H3015.9 M3006.9 930.4 H3015.9" stroke-width="1.5"/>
<path d="M3006.9 955.8 H3015.9 M3006.9 958.4 H3015.9" stroke-width="1.5"/>
<path d="M3006.9 915.0 H3015.9 M3006.9 971.2 H3015.9" stroke-width="2.4"/>
<rect x="3006.9" y="1179.0" width="9" height="62.5" rx="1.5" fill="#E5D9C3" stroke-width="1.6"/>
<rect x="3007.9" y="1180.0" width="3.5" height="60.5" fill="#9C9282" stroke="none"/>
<path d="M3006.9 1194.0 H3015.9 M3006.9 1196.5 H3015.9" stroke-width="1.5"/>
<path d="M3006.9 1224.0 H3015.9 M3006.9 1226.5 H3015.9" stroke-width="1.5"/>
<path d="M3006.9 1180.0 H3015.9 M3006.9 1240.5 H3015.9" stroke-width="2.4"/>
<rect x="3006.9" y="1450.0" width="9" height="62.5" rx="1.5" fill="#E5D9C3" stroke-width="1.6"/>
<rect x="3007.9" y="1451.0" width="3.5" height="60.5" fill="#9C9282" stroke="none"/>
<path d="M3006.9 1465.0 H3015.9 M3006.9 1467.5 H3015.9" stroke-width="1.5"/>
<path d="M3006.9 1495.0 H3015.9 M3006.9 1497.5 H3015.9" stroke-width="1.5"/>
<path d="M3006.9 1451.0 H3015.9 M3006.9 1511.5 H3015.9" stroke-width="2.4"/>
<rect x="3006.9" y="1721.0" width="9" height="58.0" rx="1.5" fill="#E5D9C3" stroke-width="1.6"/>
<rect x="3007.9" y="1722.0" width="3.5" height="56.0" fill="#9C9282" stroke="none"/>
<path d="M3006.9 1734.8 H3015.9 M3006.9 1737.4 H3015.9" stroke-width="1.5"/>
<path d="M3006.9 1762.6 H3015.9 M3006.9 1765.2 H3015.9" stroke-width="1.5"/>
<path d="M3006.9 1722.0 H3015.9 M3006.9 1778.0 H3015.9" stroke-width="2.4"/>
<line x1="3011.2" y1="804.4" x2="3011.2" y2="1889.0" stroke-width="3.2"/>
<rect x="3493.1" y="914.0" width="9" height="58.2" rx="1.5" fill="#E5D9C3" stroke-width="1.6"/>
<rect x="3494.1" y="915.0" width="3.5" height="56.2" fill="#9C9282" stroke="none"/>
<path d="M3493.1 927.8 H3502.1 M3493.1 930.4 H3502.1" stroke-width="1.5"/>
<path d="M3493.1 955.8 H3502.1 M3493.1 958.4 H3502.1" stroke-width="1.5"/>
<path d="M3493.1 915.0 H3502.1 M3493.1 971.2 H3502.1" stroke-width="2.4"/>
<rect x="3493.1" y="1181.0" width="9" height="59.0" rx="1.5" fill="#E5D9C3" stroke-width="1.6"/>
<rect x="3494.1" y="1182.0" width="3.5" height="57.0" fill="#9C9282" stroke="none"/>
<path d="M3493.1 1195.0 H3502.1 M3493.1 1197.6 H3502.1" stroke-width="1.5"/>
<path d="M3493.1 1223.4 H3502.1 M3493.1 1226.0 H3502.1" stroke-width="1.5"/>
<path d="M3493.1 1182.0 H3502.1 M3493.1 1239.0 H3502.1" stroke-width="2.4"/>
<rect x="3493.1" y="1451.0" width="9" height="58.0" rx="1.5" fill="#E5D9C3" stroke-width="1.6"/>
<rect x="3494.1" y="1452.0" width="3.5" height="56.0" fill="#9C9282" stroke="none"/>
<path d="M3493.1 1464.8 H3502.1 M3493.1 1467.4 H3502.1" stroke-width="1.5"/>
<path d="M3493.1 1492.6 H3502.1 M3493.1 1495.2 H3502.1" stroke-width="1.5"/>
<path d="M3493.1 1452.0 H3502.1 M3493.1 1508.0 H3502.1" stroke-width="2.4"/>
<rect x="3493.1" y="1721.0" width="9" height="58.0" rx="1.5" fill="#E5D9C3" stroke-width="1.6"/>
<rect x="3494.1" y="1722.0" width="3.5" height="56.0" fill="#9C9282" stroke="none"/>
<path d="M3493.1 1734.8 H3502.1 M3493.1 1737.4 H3502.1" stroke-width="1.5"/>
<path d="M3493.1 1762.6 H3502.1 M3493.1 1765.2 H3502.1" stroke-width="1.5"/>
<path d="M3493.1 1722.0 H3502.1 M3493.1 1778.0 H3502.1" stroke-width="2.4"/>
<line x1="3497.4" y1="804.4" x2="3497.4" y2="1889.0" stroke-width="3.2"/>
<rect x="3979.4" y="914.0" width="9" height="58.2" rx="1.5" fill="#E5D9C3" stroke-width="1.6"/>
<rect x="3980.4" y="915.0" width="3.5" height="56.2" fill="#9C9282" stroke="none"/>
<path d="M3979.4 927.8 H3988.4 M3979.4 930.4 H3988.4" stroke-width="1.5"/>
<path d="M3979.4 955.8 H3988.4 M3979.4 958.4 H3988.4" stroke-width="1.5"/>
<path d="M3979.4 915.0 H3988.4 M3979.4 971.2 H3988.4" stroke-width="2.4"/>
<rect x="3979.4" y="1179.0" width="9" height="62.5" rx="1.5" fill="#E5D9C3" stroke-width="1.6"/>
<rect x="3980.4" y="1180.0" width="3.5" height="60.5" fill="#9C9282" stroke="none"/>
<path d="M3979.4 1194.0 H3988.4 M3979.4 1196.5 H3988.4" stroke-width="1.5"/>
<path d="M3979.4 1224.0 H3988.4 M3979.4 1226.5 H3988.4" stroke-width="1.5"/>
<path d="M3979.4 1180.0 H3988.4 M3979.4 1240.5 H3988.4" stroke-width="2.4"/>
<rect x="3979.4" y="1450.0" width="9" height="62.5" rx="1.5" fill="#E5D9C3" stroke-width="1.6"/>
<rect x="3980.4" y="1451.0" width="3.5" height="60.5" fill="#9C9282" stroke="none"/>
<path d="M3979.4 1465.0 H3988.4 M3979.4 1467.5 H3988.4" stroke-width="1.5"/>
<path d="M3979.4 1495.0 H3988.4 M3979.4 1497.5 H3988.4" stroke-width="1.5"/>
<path d="M3979.4 1451.0 H3988.4 M3979.4 1511.5 H3988.4" stroke-width="2.4"/>
<rect x="3979.4" y="1721.0" width="9" height="58.0" rx="1.5" fill="#E5D9C3" stroke-width="1.6"/>
<rect x="3980.4" y="1722.0" width="3.5" height="56.0" fill="#9C9282" stroke="none"/>
<path d="M3979.4 1734.8 H3988.4 M3979.4 1737.4 H3988.4" stroke-width="1.5"/>
<path d="M3979.4 1762.6 H3988.4 M3979.4 1765.2 H3988.4" stroke-width="1.5"/>
<path d="M3979.4 1722.0 H3988.4 M3979.4 1778.0 H3988.4" stroke-width="2.4"/>
<line x1="3983.7" y1="804.4" x2="3983.7" y2="1889.0" stroke-width="3.2"/>
<path d="M3016.2 1179.5 H3023.2 Q3031.7 1179.5 3031.7 1188.0 V1232.5 Q3031.7 1241.5 3023.2 1241.5 H3016.2 V1236.5 H3022.2 Q3026.7 1236.5 3026.7 1231.5 V1189.0 Q3026.7 1184.0 3022.2 1184.0 H3016.2 Z" fill="#E5D9C3" stroke-width="1.5"/>
<path d="M3016.2 1450.5 H3023.2 Q3031.7 1450.5 3031.7 1459.0 V1503.5 Q3031.7 1512.5 3023.2 1512.5 H3016.2 V1507.5 H3022.2 Q3026.7 1507.5 3026.7 1502.5 V1460.0 Q3026.7 1455.0 3022.2 1455.0 H3016.2 Z" fill="#E5D9C3" stroke-width="1.5"/>
<path d="M3988.7 1179.5 H3995.7 Q4004.2 1179.5 4004.2 1188.0 V1232.5 Q4004.2 1241.5 3995.7 1241.5 H3988.7 V1236.5 H3994.7 Q3999.2 1236.5 3999.2 1231.5 V1189.0 Q3999.2 1184.0 3994.7 1184.0 H3988.7 Z" fill="#E5D9C3" stroke-width="1.5"/>
<path d="M3988.7 1450.5 H3995.7 Q4004.2 1450.5 4004.2 1459.0 V1503.5 Q4004.2 1512.5 3995.7 1512.5 H3988.7 V1507.5 H3994.7 Q3999.2 1507.5 3999.2 1502.5 V1460.0 Q3999.2 1455.0 3994.7 1455.0 H3988.7 Z" fill="#E5D9C3" stroke-width="1.5"/>
<rect x="4444.7" y="1350.8" width="14.2" height="104.7" rx="7.1" fill="#D4C5AF" stroke-width="1.8"/>
<circle cx="4451.8" cy="1357.8" r="2.6" fill="#141414" stroke="none"/><circle cx="4451.8" cy="1448.4" r="2.6" fill="#141414" stroke="none"/>
<path d="M4375.8 1365.6 H4432 Q4437 1365.6 4441 1368.5 L4455 1378.5 A5.5 5.5 0 0 1 4448 1387 L4435 1377 Q4431 1374.2 4427 1374.2 H4375.8 A4.3 4.3 0 0 1 4375.8 1365.6 Z" stroke-width="1.8"/>
<path d="M4441 1368.5 L4455 1378.5 A5.5 5.5 0 0 1 4448 1387 L4435 1377 Q4438 1376 4441 1368.5 Z" fill="#D4C5AF" stroke="none"/>
<path d="M4441 1368.5 L4455 1378.5 A5.5 5.5 0 0 1 4448 1387 L4435 1377" stroke-width="1.8"/>
<circle cx="4451.8" cy="1381.4" r="2.3" stroke-width="1.5"/>
<path d="M4451.8 1421.5 A3.2 3.2 0 0 1 4453.6 1427.5 L4453.2 1432 H4450.4 L4450 1427.5 A3.2 3.2 0 0 1 4451.8 1421.5 Z" stroke-width="1.4"/>
</g>
<g stroke="#141414" stroke-width="2" fill="none" stroke-linejoin="miter">
<polygon points="2563.2,2020.5 3010.3,2264 2999.9,2282.5 2552.9,2039.4"/>
<polygon points="3012,2278.5 3485.7,2020.5 3497.1,2040.4 3022.4,2298.4"/>
<polygon points="3509,2020.5 3983,2278.4 3972.1,2298.6 3497.7,2040.4"/>
<polygon points="3984.7,2265.5 4433.75,2020.8 4444.9,2039.4 3994.8,2284"/>
<line x1="2600.4" y1="2041" x2="2590.7" y2="2059.3"/>
<line x1="2972.6" y1="2244.1" x2="2963.1" y2="2262.3"/>
<line x1="3548.4" y1="2042.3" x2="3538.1" y2="2062"/>
<line x1="3943" y1="2257.8" x2="3932.9" y2="2276.4"/>
<polyline points="2969.2,2220.2 2999.9,2237.7 2991.1,2253.2"/>
<polyline points="3939.4,2232.3 3971.7,2250.5 3962.8,2267.5"/>
</g>
<text x="3394" y="2339.8" font-family="Liberation Sans" font-size="27.2" fill="#1E1E1E">W144"xH82 1/8"</text>
</svg>
<div class="r" style="left:30.8px;top:2602.5px;width:417.7px;height:67.0px;background:linear-gradient(#FFFFFF,#F6F6F6);border:2px solid #C9C9C9;border-radius:9px;"></div>
<div class="t" style="left:-760.4px;width:2000px;text-align:center;top:2625.5px;font-size:26.3px;color:#1E1E1E;font-weight:400;">Discard Frame Changes</div>
<div class="r" style="left:2992.0px;top:2602.0px;width:193.0px;height:68.0px;background:linear-gradient(#4A82CA,#2F5D99);border:1.5px solid #2C5A94;border-radius:9px;"></div>
<div class="t" style="left:3025.5px;top:2625.1px;font-size:27px;color:#fff;font-weight:400;">Reports</div>
<div class="r" style="left:3191.0px;top:2602.0px;width:338.0px;height:68.0px;background:linear-gradient(#4A82CA,#2F5D99);border:1.5px solid #2C5A94;border-radius:9px;"></div>
<div class="t" style="left:2360.0px;width:2000px;text-align:center;top:2625.1px;font-size:27px;color:#fff;font-weight:400;">Support Request</div>
<div class="r" style="left:3535.6px;top:2602.0px;width:396.0px;height:68.0px;background:linear-gradient(#4A82CA,#2F5D99);border:1.5px solid #2C5A94;border-radius:9px;"></div>
<div class="t" style="left:2733.6px;width:2000px;text-align:center;top:2625.1px;font-size:27px;color:#fff;font-weight:400;">Custom Item Request</div>
<div class="r" style="left:3938.0px;top:2602.0px;width:312.0px;height:68.0px;background:linear-gradient(#4A82CA,#2F5D99);border:1.5px solid #2C5A94;border-radius:9px;"></div>
<div class="t" style="left:3094.0px;width:2000px;text-align:center;top:2625.1px;font-size:27px;color:#fff;font-weight:400;">Freehand Item</div>
<div class="r" style="left:4257.0px;top:2602.0px;width:210.0px;height:68.0px;background:linear-gradient(#4A82CA,#2F5D99);border:1.5px solid #2C5A94;border-radius:9px;"></div>
<div class="t" style="left:3362.0px;width:2000px;text-align:center;top:2625.1px;font-size:27px;color:#fff;font-weight:400;">Frame</div>
<div class="r" style="left:4473.0px;top:2602.0px;width:176.0px;height:68.0px;background:linear-gradient(#4A82CA,#2F5D99);border:1.5px solid #2C5A94;border-radius:9px;"></div>
<div class="t" style="left:4506.5px;top:2625.1px;font-size:27px;color:#fff;font-weight:400;">Status</div>
<svg class="r" style="left:3135px;top:2633px;" width="17" height="9" viewBox="0 0 17 9"><path d="M0 9 L8.5 0 L17 9 Z" fill="#fff"/></svg>
<svg class="r" style="left:4596px;top:2633px;" width="17" height="9" viewBox="0 0 17 9"><path d="M0 9 L8.5 0 L17 9 Z" fill="#fff"/></svg>
<div class="r" style="left:0.0px;top:2702.0px;width:4682.0px;height:96.0px;background:linear-gradient(90deg,#6699DA 0%,#5A8ACB 30%,#4677B5 60%,#2E5B95 100%);"></div>
<svg class="r" style="left:0px;top:0px;" width="200" height="2798" viewBox="0 0 200 2798"><polygon points="42.8,2723.4 54.8,2721.6 60.6,2735" fill="#fff"/><polygon points="63.1,2721.2 76.2,2729.4 70.7,2737.9" fill="#fff"/><polygon points="38.5,2729.6 50.1,2739 33.4,2739.3" fill="#fff"/><polygon points="33,2747.3 44.6,2746.6 35.2,2760" fill="#fff"/><polygon points="43.9,2757.8 51.9,2776 38.5,2766.5" fill="#fff"/><polygon points="54.1,2765 71.8,2777.8 59.9,2778.8" fill="#fff"/><polygon points="67.8,2765.4 84.9,2765.4 79.8,2774.9" fill="#fff"/></svg>
<div class="t" style="left:48.5px;top:2730.7px;font-size:34px;color:#fff;font-weight:700;letter-spacing:-0.4px;">softtech</div>
<div class="t" style="left:187.5px;top:2745.9px;font-size:15.5px;color:#fff;font-weight:400;">A <b>Cyncly</b> Company</div>
<div class="t" style="left:354.5px;top:2740.0px;font-size:23px;color:#fff;font-weight:400;">Copyright Soft Tech NZ LTD © 2023, Powered by V6 Online</div>
<div class="r" style="left:994.0px;top:2733.0px;width:2.0px;height:34.0px;background:#fff;"></div>
<div class="t" style="left:1025.5px;top:2739.6px;font-size:23.5px;color:#fff;font-weight:400;">Build 20231021.1</div>
</div></body></html>
